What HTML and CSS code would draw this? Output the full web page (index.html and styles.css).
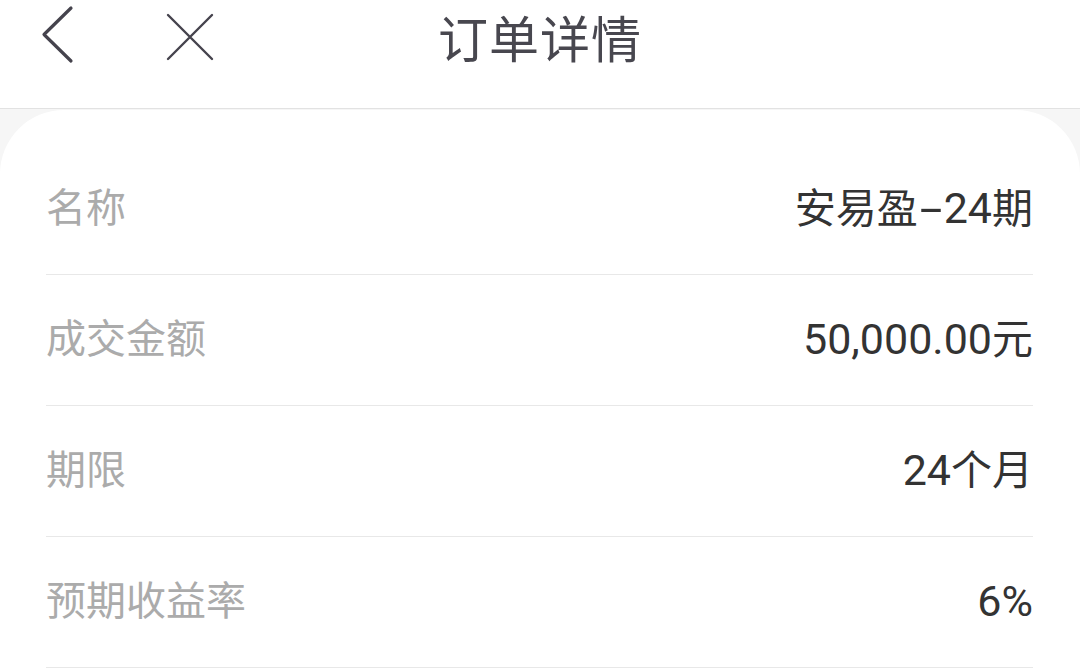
FILE: index.html
```html
<!DOCTYPE html>
<html lang="zh-CN">
<head>
  <meta charset="UTF-8" />
  <meta name="viewport" content="width=device-width, initial-scale=1.0"/>
  <title>订单详情</title>
  <link rel="stylesheet" href="styles.css">
</head>
<body>

  <header class="nav-bar">
    <div class="nav-left">
      <button class="nav-btn back-btn" aria-label="返回">
        <svg width="40" height="64" viewBox="0 0 40 64">
          <polyline points="30,3 3,29.5 30,56" fill="none" stroke="#45434d" stroke-width="3.2" stroke-linecap="round" stroke-linejoin="round"/>
        </svg>
      </button>
      <button class="nav-btn close-btn" aria-label="关闭">
        <svg width="48" height="48" viewBox="0 0 48 48">
          <path d="M2 2 L46 46 M46 2 L2 46" fill="none" stroke="#45434d" stroke-width="2.4" stroke-linecap="round"/>
        </svg>
      </button>
    </div>
    <h1 class="nav-title">订单详情</h1>
    <div class="nav-right"></div>
  </header>

  <main class="detail-card">
    <div class="detail-row">
      <span class="label">名称</span>
      <span class="value">安易盈<span class="num"><span class="dash">-</span>24</span>期</span>
    </div>
    <div class="detail-row">
      <span class="label">成交金额</span>
      <span class="value"><span class="num">50,000.00</span>元</span>
    </div>
    <div class="detail-row">
      <span class="label">期限</span>
      <span class="value"><span class="num">24</span>个月</span>
    </div>
    <div class="detail-row">
      <span class="label">预期收益率</span>
      <span class="value"><span class="num">6%</span></span>
    </div>
  </main>

</body>
</html>
```

FILE: styles.css
```css
* { box-sizing: border-box; }

body {
  margin: 0;
  background: #f6f6f6;
  font-family: "Noto Sans CJK SC", "Noto Sans", sans-serif;
  color: #333;
}

.nav-bar {
  height: 109px;
  background: #fff;
  border-bottom: 1px solid #e2e2e2;
  display: grid;
  grid-template-columns: 1fr auto 1fr;
  align-items: center;
}

.nav-left {
  display: flex;
  align-items: center;
  padding-left: 41px;
  padding-bottom: 36px;
}

.nav-btn {
  background: none;
  border: none;
  padding: 0;
  display: flex;
  cursor: pointer;
}

.close-btn {
  margin-left: 85px;
}

.nav-title {
  margin: 0;
  padding-bottom: 38px;
  font-size: 50px;
  font-weight: 400;
  color: #48474f;
  letter-spacing: 1px;
}

.detail-card {
  margin-top: 1px;
  background: #fff;
  border-radius: 64px 64px 0 0;
  padding: 34px 47px 0 46px;
  min-height: 560px;
}

.detail-row {
  height: 131px;
  padding-bottom: 8px;
  display: flex;
  justify-content: space-between;
  align-items: center;
  border-bottom: 1px solid #e8e8e8;
  font-size: 40px;
}

.label {
  color: #ababab;
}

.value {
  color: #333;
  font-size: 41px;
}

.num {
  font-family: Roboto, "Noto Sans", sans-serif;
  font-size: 43px;
}

.dash {
  display: inline-block;
  margin: 0 7px;
  transform: scaleX(1.9);
}
```
